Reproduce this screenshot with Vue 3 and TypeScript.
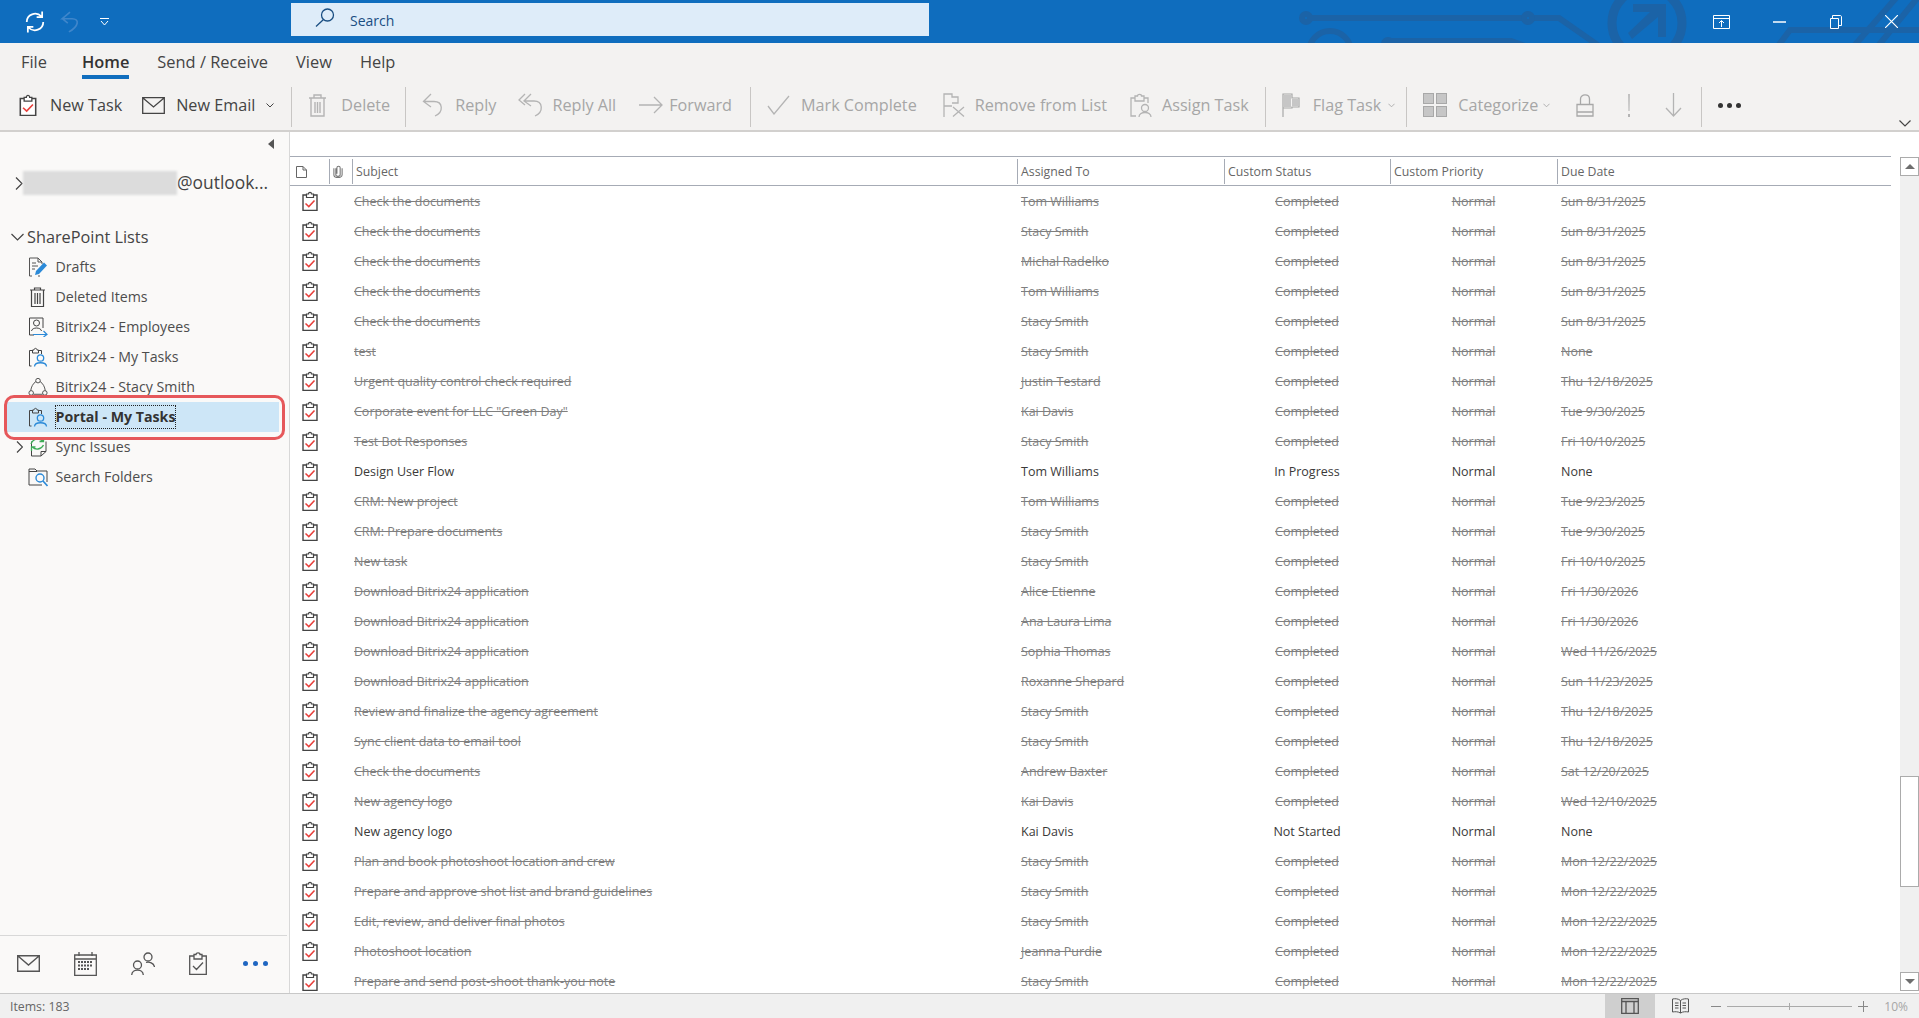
<script setup lang="ts">
const docs = 'Check the documents'
const dl = 'Download Bitrix24 application'

// subject, assigned, due, status (empty status = completed)
const rows: [string, string, string, string?][] = [
  [docs, 'Tom Williams', 'Sun 8/31/2025'],
  [docs, 'Stacy Smith', 'Sun 8/31/2025'],
  [docs, 'Michal Radelko', 'Sun 8/31/2025'],
  [docs, 'Tom Williams', 'Sun 8/31/2025'],
  [docs, 'Stacy Smith', 'Sun 8/31/2025'],
  ['test', 'Stacy Smith', 'None'],
  ['Urgent quality control check required', 'Justin Testard', 'Thu 12/18/2025'],
  ['Corporate event for LLC "Green Day"', 'Kai Davis', 'Tue 9/30/2025'],
  ['Test Bot Responses', 'Stacy Smith', 'Fri 10/10/2025'],
  ['Design User Flow', 'Tom Williams', 'None', 'In Progress'],
  ['CRM: New project', 'Tom Williams', 'Tue 9/23/2025'],
  ['CRM: Prepare documents', 'Stacy Smith', 'Tue 9/30/2025'],
  ['New task', 'Stacy Smith', 'Fri 10/10/2025'],
  [dl, 'Alice Etienne', 'Fri 1/30/2026'],
  [dl, 'Ana Laura Lima', 'Fri 1/30/2026'],
  [dl, 'Sophia Thomas', 'Wed 11/26/2025'],
  [dl, 'Roxanne Shepard', 'Sun 11/23/2025'],
  ['Review and finalize the agency agreement', 'Stacy Smith', 'Thu 12/18/2025'],
  ['Sync client data to email tool', 'Stacy Smith', 'Thu 12/18/2025'],
  [docs, 'Andrew Baxter', 'Sat 12/20/2025'],
  ['New agency logo', 'Kai Davis', 'Wed 12/10/2025'],
  ['New agency logo', 'Kai Davis', 'None', 'Not Started'],
  ['Plan and book photoshoot location and crew', 'Stacy Smith', 'Mon 12/22/2025'],
  ['Prepare and approve shot list and brand guidelines', 'Stacy Smith', 'Mon 12/22/2025'],
  ['Edit, review, and deliver final photos', 'Stacy Smith', 'Mon 12/22/2025'],
  ['Photoshoot location', 'Jeanna Purdie', 'Mon 12/22/2025'],
  ['Prepare and send post-shoot thank-you note', 'Stacy Smith', 'Mon 12/22/2025'],
]

const tabs = ['File', 'Home', 'Send / Receive', 'View', 'Help']
const folders = [
  { name: 'Drafts', icon: 'f-drafts' },
  { name: 'Deleted Items', icon: 'f-trash' },
  { name: 'Bitrix24 - Employees', icon: 'f-contacts' },
  { name: 'Bitrix24 - My Tasks', icon: 'f-tasks' },
  { name: 'Bitrix24 - Stacy Smith', icon: 'f-group' },
  { name: 'Portal - My Tasks', icon: 'f-tasks', active: true },
  { name: 'Sync Issues', icon: 'f-sync', more: true },
  { name: 'Search Folders', icon: 'f-search' },
]
</script>

<template>
  <div class="app">
    <svg class="defs" width="0" height="0">
      <symbol id="task" viewBox="0 0 16 20">
        <path d="M4.5 4H1V19.5H15V4H11.5" fill="#fff" stroke="#444" stroke-width="1.4" />
        <path d="M4.5 6.5V3H6.5C6.5 .7 9.5 .7 9.5 3H11.5V6.5Z" fill="#fff" stroke="#444" stroke-width="1.2" />
        <path d="M3.5 12.5L6.8 15.6L12.5 9.5" fill="none" stroke="#e8403c" stroke-width="1.5" />
      </symbol>
      <symbol id="f-drafts" viewBox="0 0 20 20">
        <path d="M4 19H1.5V1H10L14 5V7M10 1V5H14M4 6H8M4 9H10M4 12H7M12 19H10" fill="none" stroke="#555" />
        <path d="M7 18L8 14L16 5.5L19 8.5L11 17Z" fill="#2b8ad8" />
      </symbol>
      <symbol id="f-trash" viewBox="0 0 20 20">
        <path d="M2 3H17M6.5 3V1H12.500V3M3.500 3V19.500H15.500V3M7 6V17M9.500 6V17M12 6V17" fill="none" stroke="#444" stroke-width="1.2" />
      </symbol>
      <symbol id="f-contacts" viewBox="0 0 20 20">
        <path d="M6 18H1.500V1H15V11" fill="none" stroke="#444" />
        <circle cx="8.500" cy="6" r="3" fill="none" stroke="#444" />
        <path d="M3.500 14C4 10 13 10 13.500 14" fill="none" stroke="#444" />
        <path d="M5 17.500H19M15.500 14L19 17.500L15.500 20" fill="none" stroke="#2b8ad8" stroke-width="1.200" />
      </symbol>
      <symbol id="f-tasks" viewBox="0 0 20 20">
        <path d="M3.500 19H1.500V3.500H4.500M10.500 3.500H13.500V7M4.500 6V3H6C6 .8 9 .8 9 3H10.500V6Z" fill="none" stroke="#444" />
        <circle cx="12.500" cy="11" r="3.200" fill="none" stroke="#2b8ad8" stroke-width="1.300" />
        <path d="M6.500 19.500C6.800 14.500 18.200 14.500 18.500 19.500" fill="none" stroke="#2b8ad8" stroke-width="1.300" />
      </symbol>
      <symbol id="f-group" viewBox="0 0 22 20">
        <g fill="none" stroke="#444">
          <circle cx="11" cy="3" r="2.500" />
          <circle cx="3.500" cy="16.500" r="2.500" />
          <circle cx="18.500" cy="16.500" r="2.500" />
          <path d="M8.700 4C5.500 6 3.500 10 3 14M13.300 4C16.500 6 18.500 10 19 14M6 18H16" />
        </g>
      </symbol>
      <symbol id="f-sync" viewBox="0 0 20 20">
        <path d="M3.500 4.500V19H13L18 14.500V4.500M18 14.500H13V19" fill="none" stroke="#444" />
        <path d="M3 7C5 1 12 1 15 4M15.500 .5V4.500H11.500M15.500 8C13 13 7 13 4.500 10M3.500 14V9.800H7.500" fill="none" stroke="#3cab55" stroke-width="1.300" />
      </symbol>
      <symbol id="f-search" viewBox="0 0 20 20">
        <path d="M14 18H1V2H7L9 4H19V15" fill="none" stroke="#444" />
        <path d="M1 4.500H9" stroke="#444" />
        <circle cx="12" cy="11" r="4" fill="none" stroke="#2b8ad8" stroke-width="1.400" />
        <path d="M15 14L19.500 19" stroke="#2b8ad8" stroke-width="1.600" />
      </symbol>
    </svg>

    <header class="titlebar">
      <svg class="circuit" width="1919" height="43" viewBox="0 0 1919 43">
        <g fill="none" stroke="#1b63a7" stroke-width="6">
          <circle cx="1306" cy="18" r="4" />
          <path d="M1310 18H1524M1532 18H1559L1599 46" />
          <circle cx="1528" cy="18" r="4" />
          <circle cx="1647" cy="23" r="35" stroke-width="9" />
          <circle cx="1330" cy="52" r="21" />
          <circle cx="1388" cy="44" r="4" />
          <path d="M1392 41H1511L1525 46" />
          <path d="M1778 46L1790 30H1919M1854 46L1896 -2M1878 46L1919 -4" />
        </g>
        <path d="M1633 4H1666V37H1658V17L1632 39L1628 33L1650 12H1633Z" fill="#1b63a7" />
      </svg>
      <div class="qat">
        <svg class="q-sync" width="22" height="22" viewBox="0 0 20 20" fill="none" stroke="#fff" stroke-width="1.600">
          <path d="M2.500 10C2.500 3 11 0 16 5M16.500 .5V5.500H11.500M17.500 10C17.500 17 9 20 4 15M3.500 19.500V14.500H8.500" />
        </svg>
        <svg class="q-undo" width="20" height="22" viewBox="0 0 18 20" fill="none" stroke="#3f86cb" stroke-width="1.500">
          <path d="M9 1L2 7H11C18 7 17 14 8 19M2 7L7 11" />
        </svg>
        <svg class="q-more" width="9" height="8" viewBox="0 0 9 8" fill="none" stroke="#fff">
          <path d="M0 .5H9M1 3L4.500 7L8 3" />
        </svg>
      </div>
      <div class="search">
        <svg width="20" height="19" viewBox="0 0 20 19" fill="none" stroke="#1a4e82" stroke-width="1.300">
          <circle cx="12.500" cy="7" r="6" />
          <path d="M8.500 11.500L1 18.500" />
        </svg>
        <span>Search</span>
      </div>
      <div class="win">
        <svg width="17" height="14" viewBox="0 0 17 14" fill="none" stroke="#fff">
          <path d="M.5 .5H16.500V13.500H.5ZM.5 3.500H16.500M8.500 12V6M6 8L8.500 5.500L11 8" />
        </svg>
        <svg width="13" height="2" viewBox="0 0 13 2" fill="none" stroke="#fff" stroke-width="1.500">
          <path d="M0 1H13" />
        </svg>
        <svg width="13" height="14" viewBox="0 0 13 14" fill="none" stroke="#fff">
          <path d="M1.500 13.500H9.500V3.500H1.500ZM3.500 3V.5H11C12 .5 12.500 1 12.500 2V10.500H10" />
        </svg>
        <svg width="13" height="13" viewBox="0 0 13 13" fill="none" stroke="#fff" stroke-width="1.200">
          <path d="M0 0L13 13M13 0L0 13" />
        </svg>
      </div>
    </header>

    <section class="ribbon">
      <nav class="tabs">
        <a v-for="t in tabs" :key="t" :class="{ on: t === 'Home' }">{{ t }}</a>
      </nav>
      <div class="tools">
        <button class="tool live new-task">
          <svg width="18" height="22"><use href="#task" /></svg>New Task
        </button>
        <button class="tool live email">
          <svg width="23" height="17" viewBox="0 0 23 17" fill="none" stroke="#444" stroke-width="1.300">
            <path d="M.7 .7H22.300V16.300H.7ZM.7 .7L11.500 10L22.300 .7" />
          </svg>New Email
          <svg class="caret" width="8" height="5" viewBox="0 0 8 5" fill="none" stroke="#444"><path d="M.5 .5L4 4L7.500 .5" /></svg>
        </button>
        <i class="sep" />
        <button class="tool del">
          <svg width="19" height="23" viewBox="0 0 19 23" fill="none" stroke="#b4b4b4" stroke-width="1.400">
            <path d="M1 4H18M6 4V1H13V4M3 4V22H16V4M7 8V19M9.500 8V19M12 8V19" />
          </svg>Delete
        </button>
        <i class="sep" />
        <button class="tool">
          <svg width="22" height="24" viewBox="0 0 22 24" fill="none" stroke="#b4b4b4" stroke-width="1.300">
            <path d="M9 1L1.500 8.500L9 14M1.500 8.500H12C21 8.500 22 19 13 23" />
          </svg>Reply
        </button>
        <button class="tool tight">
          <svg width="26" height="24" viewBox="0 0 26 24" fill="none" stroke="#b4b4b4" stroke-width="1.300">
            <path d="M7 1L1 7L7 12M13 1L6 8L13 13M6 8H16C25 8 26 19 17 23" />
          </svg>Reply All
        </button>
        <button class="tool tighter">
          <svg width="24" height="18" viewBox="0 0 24 18" fill="none" stroke="#b4b4b4" stroke-width="1.300">
            <path d="M0 9H23M15 1L23 9L15 17" />
          </svg>Forward
        </button>
        <i class="sep" />
        <button class="tool mark">
          <svg width="23" height="20" viewBox="0 0 23 20" fill="none" stroke="#b4b4b4" stroke-width="1.300">
            <path d="M1 11L7 19L22 1" />
          </svg>Mark Complete
        </button>
        <button class="tool snug remove">
          <svg width="22" height="24" viewBox="0 0 22 24" fill="none" stroke="#b4b4b4" stroke-width="1.300">
            <path d="M1 24V1H9V4H15V10H9M1 13H9M10 14L21 23.500M21 14L10 23.500" />
          </svg>Remove from List
        </button>
        <button class="tool snug assign">
          <svg width="22" height="24" viewBox="0 0 22 24" fill="none" stroke="#b4b4b4" stroke-width="1.300">
            <path d="M6 23H1V5H5M14 5H18V10M5 8V3H7.500C7.500 .7 11.500 .7 11.500 3H14V8Z" />
            <circle cx="15" cy="15" r="3.500" />
            <path d="M9 24C9 18 21 18 21 24" />
          </svg>Assign Task
        </button>
        <i class="sep" />
        <button class="tool flag">
          <svg width="18" height="24" viewBox="0 0 18 24">
            <path d="M1 24V1H10V5H17V14H10V15H1" fill="none" stroke="#a8a8a8" stroke-width="1.200" />
            <path d="M2 2H9V14H2ZM10 6H16V13H10Z" fill="#c6c6c6" />
          </svg>Flag Task
          <svg class="caret dim" width="7" height="5" viewBox="0 0 8 5" fill="none" stroke="#a8a8a8"><path d="M.5 .5L4 4L7.500 .5" /></svg>
        </button>
        <i class="sep" />
        <button class="tool">
          <svg width="24" height="24" viewBox="0 0 24 24">
            <g fill="#c6c6c6" stroke="#a8a8a8">
              <rect x=".5" y=".5" width="10" height="10" />
              <rect x="13.500" y=".5" width="10" height="10" />
              <rect x=".5" y="13.500" width="10" height="10" />
              <rect x="13.500" y="13.500" width="10" height="10" />
            </g>
          </svg>Categorize
          <svg class="caret dim" width="7" height="5" viewBox="0 0 8 5" fill="none" stroke="#a8a8a8"><path d="M.5 .5L4 4L7.500 .5" /></svg>
        </button>
        <button class="tool bare lock">
          <svg width="18" height="23" viewBox="0 0 18 23" fill="none" stroke="#a8a8a8" stroke-width="1.300">
            <path d="M1 10.500H17V22H1ZM4.500 10.500V5C4.500 -.5 13.500 -.5 13.500 5V10.500M1 18H17" />
          </svg>
        </button>
        <button class="tool bare imp">
          <svg width="4" height="23" viewBox="0 0 4 23" fill="#b4b4b4"><path d="M1.200 0H2.800L2.500 17H1.500ZM1 20H3V23H1Z" /></svg>
        </button>
        <button class="tool bare low">
          <svg width="17" height="24" viewBox="0 0 17 24" fill="none" stroke="#b4b4b4" stroke-width="1.300">
            <path d="M8.500 0V23M1 15L8.500 23L16 15" />
          </svg>
        </button>
        <i class="sep" />
        <div class="dots"><b /><b /><b /></div>
      </div>
      <svg class="collapse" width="12" height="7" viewBox="0 0 12 7" fill="none" stroke="#444" stroke-width="1.200">
        <path d="M.5 .5L6 6L11.500 .5" />
      </svg>
    </section>

    <main class="main">
      <aside class="pane">
        <svg class="fold" width="7" height="10" viewBox="0 0 7 10" fill="#555"><path d="M6 0V10L0 5Z" /></svg>
        <div class="tree">
          <div class="account">
            <svg width="8" height="13" viewBox="0 0 8 13" fill="none" stroke="#444" stroke-width="1.200"><path d="M1 .5L7 6.500L1 12.500" /></svg>
            <span class="blur" />
            <span class="mail">@outlook...</span>
          </div>
          <div class="root">
            <svg width="13" height="8" viewBox="0 0 13 8" fill="none" stroke="#444" stroke-width="1.200"><path d="M.5 1L6.500 7L12.500 1" /></svg>
            <span>SharePoint Lists</span>
          </div>
          <div v-for="f in folders" :key="f.name" class="folder" :class="{ active: f.active }">
            <svg v-if="f.more" class="more" width="7" height="12" viewBox="0 0 7 12" fill="none" stroke="#444" stroke-width="1.200"><path d="M1 .5L6.500 6L1 11.500" /></svg>
            <svg width="20" height="20"><use :href="'#' + f.icon" /></svg>
            <span>{{ f.name }}</span>
          </div>
        </div>
        <div class="modules">
          <svg width="23" height="17" viewBox="0 0 23 17" fill="none" stroke="#555" stroke-width="1.400"><path d="M.7 .7H22.300V16.300H.7ZM.7 .7L11.500 10L22.300 .7" /></svg>
          <svg width="23" height="24" viewBox="0 0 23 24" fill="none" stroke="#555" stroke-width="1.300">
            <path d="M.7 3H22.300V23.300H.7ZM.7 7H22.300M5 0V4M18 0V4" />
            <path d="M4 10H19M4 13.500H19M4 17H15" stroke-width="2" stroke-dasharray="2 1" />
          </svg>
          <svg width="24" height="23" viewBox="0 0 24 23" fill="none" stroke="#555" stroke-width="1.300">
            <circle cx="6.500" cy="13" r="4" /><path d="M.7 23C1 16.500 12 16.500 12.300 23" />
            <circle cx="17" cy="5" r="4" /><path d="M15 10.500C18 9.500 23 11 23.500 15" />
          </svg>
          <svg width="18" height="23" viewBox="0 0 18 23" fill="none" stroke="#555" stroke-width="1.300">
            <path d="M5 4H.7V22.300H17.300V4H13M5 7V2.500H7C7 .3 11 .3 11 2.500H13V7ZM4 14L7.500 17.500L14 10.500" />
          </svg>
          <div class="module-dots"><b /><b /><b /></div>
        </div>
        <div class="ring" />
      </aside>

      <section class="content">
        <div class="list">
          <div class="grid head">
            <div class="hcell first">
              <svg width="11" height="12" viewBox="0 0 11 12" fill="none" stroke="#666"><path d="M.5 .5H7L10.500 4V11.500H.5ZM7 .5V4H10.500" /></svg>
            </div>
            <div class="hcell clip">
              <svg width="10" height="13" viewBox="0 0 9 12" fill="none" stroke="#777"><path d="M2.500 3V9C2.500 11 6.500 11 6.500 9V2.500C6.500 .7 3.500 .7 3.500 2.500V8M.7 3V9C.7 12.500 8.300 12.500 8.300 9V3" /></svg>
            </div>
            <div class="hcell">Subject</div>
            <div class="hcell">Assigned To</div>
            <div class="hcell">Custom Status</div>
            <div class="hcell">Custom Priority</div>
            <div class="hcell">Due Date</div>
          </div>
          <div class="rows">
            <div v-for="(r, i) in rows" :key="i" class="grid row" :class="{ done: !r[3] }">
              <div class="ico"><svg width="16" height="20"><use href="#task" /></svg></div>
              <div />
              <div class="subj"><span>{{ r[0] }}</span></div>
              <div class="who"><span>{{ r[1] }}</span></div>
              <div class="mid"><span>{{ r[3] || 'Completed' }}</span></div>
              <div class="mid"><span>Normal</span></div>
              <div class="due"><span>{{ r[2] }}</span></div>
            </div>
          </div>
        </div>
        <div class="scroll">
          <div class="sbtn"><i class="up" /></div>
          <div class="track"><div class="thumb" /></div>
          <div class="sbtn"><i class="down" /></div>
        </div>
      </section>
    </main>

    <footer class="status">
      <span class="count">Items: 183</span>
      <div class="views">
        <div class="view on">
          <svg width="18" height="16" viewBox="0 0 18 16" fill="none" stroke="#555" stroke-width="1.300"><path d="M.7 .7H17.300V15.300H.7ZM.7 3.500H17.300M5 3.500V15.300M13 3.500V15.300" /></svg>
        </div>
        <div class="view">
          <svg width="17" height="16" viewBox="0 0 17 16" fill="none" stroke="#555"><path d="M8.500 2.500C6 .5 3 .5 .5 1V14C3 13.500 6 13.500 8.500 15C11 13.500 14 13.500 16.500 14V1C14 .5 11 .5 8.500 2.500ZM8.500 2.500V15M3 5H6.500M3 7.500H6.500M3 10H6.500M10.500 5H14M10.500 7.500H14M10.500 10H14" /></svg>
        </div>
      </div>
      <div class="zoom">
        <i class="minus" />
        <div class="slider"><i /></div>
        <i class="plus" />
        <span>10%</span>
      </div>
    </footer>
  </div>
</template>

<style>
html, body { margin: 0; background: #fff; overflow: hidden; }
</style>

<style scoped>
.app {
  width: 1919px;
  height: 1018px;
  display: flex;
  flex-direction: column;
  overflow: hidden;
  font-family: "Open Sans", "Noto Sans", sans-serif;
  color: #444;
}
.defs { position: absolute; }

.titlebar {
  height: 43px;
  background: #0f6dbe;
  display: flex;
  align-items: center;
  position: relative;
  overflow: hidden;
  flex: none;
}
.circuit { position: absolute; left: 0; top: 0; }
.qat {
  width: 291px;
  flex: none;
  display: flex;
  align-items: center;
  padding-left: 24px;
  box-sizing: border-box;
  position: relative;
}
.q-undo { margin-left: 14px; }
.q-more { margin-left: 20px; }
.search {
  width: 638px;
  height: 33px;
  margin-top: -4px;
  background: #deecf9;
  display: flex;
  align-items: center;
  color: #1a4e82;
  font-size: 14px;
  position: relative;
  padding-left: 24px;
  box-sizing: border-box;
}
.search span { padding-top: 2px; }
.search svg { margin-right: 15px; margin-top: -4px; }
.win {
  position: relative;
  margin-left: auto;
  display: grid;
  grid-template-columns: 17px 13px 13px 13px;
  column-gap: 43px;
  align-items: center;
  padding-right: 21px;
}

.ribbon {
  height: 89px;
  background: #f3f2f1;
  border-bottom: 2px solid #d2d0ce;
  flex: none;
  position: relative;
  box-sizing: border-box;
}
.tabs {
  display: flex;
  gap: 28px;
  padding: 0 0 0 21px;
  height: 37px;
  align-items: flex-start;
  font-size: 16.400px;
}
.tabs a {
  line-height: 38px;
  height: 36px;
  box-sizing: border-box;
  color: #444;
}
.tabs a:first-child { margin-right: 7px; }
.tabs a.on {
  font-weight: 600;
  color: #333;
  border-bottom: 4px solid #106ebe;
}
.tools {
  display: flex;
  align-items: center;
  height: 40px;
  margin-top: 7px;
  padding-left: 19px;
  font-size: 16.200px;
}
.tool {
  all: unset;
  display: flex;
  align-items: center;
  gap: 11px;
  margin-right: 22px;
  margin-top: -4px;
  color: #a6a6a6;
  white-space: nowrap;
}
.tool.live { color: #444; }
.tool.new-task { gap: 13px; margin-right: 20px; }
.tool.email { margin-right: 24px; }
.tool.del { gap: 14px; }
.tool.tight { gap: 8px; margin-right: 23px; }
.tool.tighter { gap: 6px; margin-right: 25px; }
.tool.mark { margin-right: 26px; }
.tool.snug { gap: 10px; }
.tool.remove { margin-right: 23px; }
.tool.assign { margin-right: 23px; }
.tool.flag { gap: 13px; margin-right: 18px; }
.caret.dim { margin-left: -6px; }
.tool.bare { margin-right: 0; }
.lock { margin-left: 4px; }
.imp { margin-left: 33px; }
.low { margin-left: 34px; }
.sep {
  width: 1px;
  height: 40px;
  background: #c8c6c4;
  margin: 0 16px 0 -7px;
  flex: none;
}
.low + .sep { margin-left: 19px; }
.dots { display: flex; gap: 4px; margin-top: -4px; }
.dots b { width: 5px; height: 5px; border-radius: 50%; background: #333; }
.collapse { position: absolute; right: 8px; bottom: 3px; }

.main {
  flex: 1;
  min-height: 0;
  display: flex;
}
.pane {
  width: 290px;
  flex: none;
  box-sizing: border-box;
  background: #faf9f8;
  border-right: 1px solid #d8d8d8;
  display: flex;
  flex-direction: column;
  position: relative;
}
.fold { position: absolute; left: 268px; top: 7px; }
.tree { flex: 1; font-size: 14.200px; }
.account {
  display: flex;
  align-items: center;
  height: 24px;
  margin-top: 39px;
  padding-left: 15px;
  font-size: 17.400px;
}
.mail { padding-bottom: 3px; }
.blur {
  width: 154px;
  height: 24px;
  background: #dcdcdc;
  filter: blur(1px);
}
.root {
  display: flex;
  align-items: center;
  gap: 3px;
  margin-top: 27px;
  padding-left: 11px;
  height: 30px;
  font-size: 16.300px;
}
.folder {
  height: 30px;
  display: flex;
  align-items: center;
  gap: 7.500px;
  padding-left: 28px;
  position: relative;
  margin-left: 0;
}
.folder span { color: #4d4d4d; margin-top: -2px; }
.folder .more { position: absolute; left: 16px; top: 9px; }
.folder.active {
  background: #cde6f7;
  margin: 0 10px 0 7px;
  padding-left: 21px;
}
.folder.active span {
  font-weight: 700;
  color: #333;
  outline: 1px dotted #222;
  outline-offset: 0;
  line-height: 22px;
  margin-top: 0;
}
.ring {
  position: absolute;
  left: 4px;
  top: 263px;
  width: 281px;
  height: 45px;
  box-sizing: border-box;
  border: 3px solid #e6585b;
  border-radius: 10px;
}
.modules {
  flex: none;
  margin-right: 2px;
  border-top: 1px solid #d8d8d8;
  display: flex;
  align-items: center;
  padding: 0 0 2px 17px;
  height: 55px;
  gap: 34px;
}
.module-dots { display: flex; gap: 5px; margin-left: 2px; }
.module-dots b { width: 5px; height: 5px; border-radius: 50%; background: #1f66c1; }

.content {
  flex: 1;
  min-width: 0;
  display: flex;
  background: #fff;
}
.list {
  width: 1601px;
  flex: none;
  padding-top: 24px;
  display: flex;
  flex-direction: column;
  min-height: 0;
}
.grid {
  display: grid;
  grid-template-columns: 39px 23px 665px 207px 166px 167px 334px;
}
.head {
  height: 30px;
  box-sizing: border-box;
  border-top: 1px solid #a6abb5;
  border-bottom: 1px solid #a6abb5;
  font-size: 12.300px;
  color: #666;
}
.hcell {
  border-left: 1px solid #a6abb5;
  margin: 2px 0 1px;
  padding-left: 3px;
  display: flex;
  align-items: center;
  white-space: nowrap;
}
.hcell.first { border-left: 0; padding-left: 6px; }
.hcell.clip { padding-left: 3px; }
.rows { flex: 1; overflow: hidden; }
.row {
  height: 30px;
  font-size: 12.500px;
  align-items: center;
  color: #3b3a39;
  white-space: nowrap;
}
.row.done { color: #7f7f7f; }
.row.done span { text-decoration: line-through; }
.ico { display: flex; padding-left: 12px; }
.subj { padding-left: 2px; }
.who { padding-left: 4px; }
.mid { text-align: center; }
.due { padding-left: 4px; }

.scroll {
  width: 19px;
  margin: 25px 0 2px 9px;
  flex: none;
  display: flex;
  flex-direction: column;
  background: #f0f0f0;
}
.sbtn {
  height: 19px;
  box-sizing: border-box;
  border: 1px solid #ababab;
  background: #fff;
  display: flex;
  align-items: center;
  justify-content: center;
  flex: none;
}
.up { border: 5px solid transparent; border-top: 0; border-bottom: 5px solid #6e6e6e; width: 0; height: 0; }
.down { border: 5px solid transparent; border-bottom: 0; border-top: 5px solid #6e6e6e; width: 0; height: 0; }
.track { flex: 1; }
.thumb {
  height: 111px;
  margin-top: 600px;
  box-sizing: border-box;
  border: 1px solid #ababab;
  background: #fff;
}

.status {
  height: 25px;
  flex: none;
  box-sizing: border-box;
  background: #f0f0f0;
  border-top: 1px solid #c8c8c8;
  display: flex;
  align-items: center;
  font-size: 12.300px;
  color: #666;
  padding-left: 10px;
}
.count { padding-top: 1px; }
.views { margin-left: auto; display: flex; height: 100%; }
.view {
  width: 50px;
  display: flex;
  align-items: center;
  justify-content: center;
}
.view.on { background: #cfcfcf; }
.zoom {
  display: flex;
  align-items: center;
  margin-left: 6px;
  padding-right: 11px;
  color: #a6a6a6;
  font-size: 12px;
}
.minus { width: 10px; height: 1px; background: #888; }
.slider {
  width: 125px;
  height: 1px;
  background: #aaa;
  margin: 0 6px;
  position: relative;
}
.slider i { position: absolute; left: 62px; top: -3px; width: 1px; height: 7px; background: #aaa; }
.plus {
  width: 10px;
  height: 1px;
  background: #888;
  position: relative;
  margin-right: 16px;
}
.plus::after { content: ""; position: absolute; left: 4.500px; top: -5px; width: 1px; height: 11px; background: #888; }
</style>
